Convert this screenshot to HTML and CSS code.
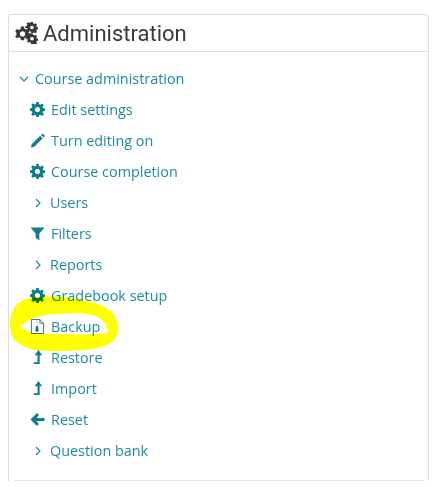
FILE: index.html
```html
<!DOCTYPE html>
<html lang="en">
<head>
  <meta charset="UTF-8">
  <title>Administration</title>
  <link rel="stylesheet" href="styles.css">
</head>
<body>
  <section class="block">
    <h2 class="block-title">
      <svg class="title-icon" viewBox="0 0 24 22"><path d="M7 4.500h3l.5 2.200 1.500.8 2-1 1.800 2.100-1.300 1.900v1.800l1.300 1.900-1.800 2.100-2-1-1.500.8-.5 2.200H7l-.5-2.200-1.500-.8-2 1L1.200 14.700l1.300-1.900V11L1.200 9.100 3 7l2 1 1.500-.8z" fill="#373a3c"/><circle cx="8.500" cy="11.900" r="2.600" fill="#fff"/><path d="M17 0h2l.3 1.400 1.200.5 1.200-.7 1.300 1.300-.7 1.200.5 1.200 1.400.3v2l-1.400.3-.5 1.200.7 1.200-1.300 1.300-1.200-.7-1.200.5L19 11h-2l-.3-1.400-1.200-.5-1.200.7-1.300-1.300.7-1.200-.5-1.200L11.300 6.300v-2l1.400-.3.500-1.200-.7-1.200 1.300-1.300 1.200.7 1.200-.5z" fill="#373a3c"/><circle cx="18" cy="5.500" r="1.800" fill="#fff"/><path d="M17 11.500h2l.3 1.400 1.200.5 1.200-.7 1.300 1.300-.7 1.200.5 1.200 1.400.3v2l-1.400.3-.5 1.200.7 1.200-1.300 1.300-1.200-.7-1.200.5L19 22h-2l-.3-1.400-1.200-.5-1.200.7-1.300-1.300.7-1.200-.5-1.200-1.400-.3v-2l1.400-.3.500-1.200-.7-1.200 1.300-1.300 1.200.7 1.200-.5z" fill="#373a3c"/><circle cx="18" cy="16.800" r="1.800" fill="#fff"/></svg>
      Administration
    </h2>
    <ul class="tree">
      <li class="tree-row tree-top"><svg class="chev" viewBox="0 0 10 10"><path d="M1 3l4 4 4-4"/></svg>Course administration</li>
      <li class="tree-row"><svg class="ico" viewBox="0 0 16 16"><path d="M6.700 0h2.600l.4 2.200 1.300.6 1.900-1.300 1.800 1.800-1.300 1.900.6 1.300 2.200.4v2.600l-2.200.4-.6 1.300 1.300 1.900-1.800 1.800-1.900-1.300-1.300.6-.4 2.200H6.700l-.4-2.200-1.300-.6-1.900 1.300-1.800-1.800 1.300-1.900-.6-1.300L-.2 9.300V6.700L2 6.300l.6-1.300L1.300 3.100l1.800-1.800L5 2.600l1.300-.6zM8 5.300a2.700 2.700 0 100 5.400 2.700 2.700 0 000-5.400z"/></svg>Edit settings</li>
      <li class="tree-row"><svg class="ico" viewBox="0 0 16 16"><path d="M1 15.500l.8-3.600L10.800 3l2.700 2.700-8.900 9zM11.800 2l1-1c.4-.3.900-.3 1.200 0l1.500 1.500c.3.300.3.800 0 1.200l-1 1z"/></svg>Turn editing on</li>
      <li class="tree-row"><svg class="ico" viewBox="0 0 16 16"><path d="M6.700 0h2.600l.4 2.200 1.300.6 1.900-1.300 1.800 1.800-1.300 1.900.6 1.300 2.200.4v2.600l-2.200.4-.6 1.300 1.300 1.900-1.800 1.800-1.900-1.300-1.300.6-.4 2.200H6.700l-.4-2.200-1.300-.6-1.900 1.300-1.800-1.800 1.300-1.900-.6-1.300L-.2 9.300V6.700L2 6.300l.6-1.300L1.300 3.100l1.800-1.800L5 2.600l1.300-.6zM8 5.300a2.700 2.700 0 100 5.400 2.700 2.700 0 000-5.400z"/></svg>Course completion</li>
      <li class="tree-row tree-branch"><svg class="chev" viewBox="0 0 10 10"><path d="M3 1l4 4-4 4"/></svg>Users</li>
      <li class="tree-row"><svg class="ico" viewBox="0 0 16 16"><path d="M.5 1.500h15L10 8v7.500L6 12.500V8z"/></svg>Filters</li>
      <li class="tree-row tree-branch"><svg class="chev" viewBox="0 0 10 10"><path d="M3 1l4 4-4 4"/></svg>Reports</li>
      <li class="tree-row"><svg class="ico" viewBox="0 0 16 16"><path d="M6.700 0h2.600l.4 2.200 1.300.6 1.900-1.300 1.800 1.800-1.300 1.900.6 1.300 2.200.4v2.600l-2.200.4-.6 1.300 1.300 1.900-1.800 1.800-1.900-1.300-1.300.6-.4 2.200H6.700l-.4-2.200-1.300-.6-1.900 1.300-1.800-1.800 1.300-1.900-.6-1.300L-.2 9.300V6.700L2 6.300l.6-1.300L1.300 3.100l1.800-1.800L5 2.600l1.300-.6zM8 5.300a2.700 2.700 0 100 5.400 2.700 2.700 0 000-5.400z"/></svg>Gradebook setup</li>
      <li class="tree-row"><svg class="ico" viewBox="0 0 16 16"><path d="M1.500.5h9l4 4v11h-13z" fill="#fff" stroke="#4a6a72"/><path d="M10.500.5v4h4" fill="none" stroke="#4a6a72"/><path d="M7 1.500h1v1H7zM7 3.500h1v1H7zM7 5.500h1v1H7z" fill="#7a8a90"/><path d="M6.600 7.500h1.800l.8 4.500a1.700 1.700 0 11-3.400 0z" fill="#0f6f80"/></svg>Backup</li>
      <li class="tree-row"><svg class="ico" viewBox="0 0 16 16"><path d="M9 0l4 5.500h-2.700V15H4v-2h4V5.500H5z"/></svg>Restore</li>
      <li class="tree-row"><svg class="ico" viewBox="0 0 16 16"><path d="M9 0l4 5.500h-2.700V15H4v-2h4V5.500H5z"/></svg>Import</li>
      <li class="tree-row"><svg class="ico" viewBox="0 0 16 16"><path d="M7.500 1 9.500 3.500 7 6.300H15.500v3.400H7l2.500 2.800-2 2.500L.5 8z"/></svg>Reset</li>
      <li class="tree-row tree-branch"><svg class="chev" viewBox="0 0 10 10"><path d="M3 1l4 4-4 4"/></svg>Question bank</li>
    </ul>
    <hr class="tree-end">
  </section>
  <svg class="marker" viewBox="0 0 438 487"><path fill-rule="evenodd" d="M23 300C40 294 70 296 95 303 110 307 119 316 118 330 117 345 100 351 60 351 30 352 12 346 10 328 9 314 15 304 23 300zM20 327C26 322 32 317 45 315 60 313 85 312 95 316 103 319 107 324 108 332 100 336 70 334 50 334 35 334 26 332 20 327z"/></svg>
</body>
</html>
```

FILE: styles.css
```css
html, body {
  height: 100%;
}
body {
  margin: 0;
  padding: 14px 9px 0 8px;
  box-sizing: border-box;
  background-color: #fff;
  font-family: "Open Sans", sans-serif;
  overflow: hidden;
  position: relative;
}
.block {
  border: 1px solid #dedede;
  border-bottom: none;
  border-radius: 4px 4px 0 0;
}
.block-title {
  display: flex;
  align-items: center;
  gap: 5px;
  height: 36px;
  margin: 0;
  padding-left: 5px;
  border-bottom: 1px solid #dedede;
  font-family: "Roboto", sans-serif;
  font-size: 22px;
  font-weight: 400;
  color: #373a3c;
}
.title-icon {
  width: 24px;
  height: 22px;
}
.tree {
  list-style: none;
  margin: 0;
  padding: 11px 0 0 21px;
}
.tree-row {
  display: flex;
  align-items: center;
  height: 31px;
  font-size: 14.4px;
  color: #1f8a9e;
}
.tree-top {
  margin-left: -11px;
}
.tree-row .ico {
  width: 15px;
  height: 15px;
  margin-right: 6px;
  fill: #0f7c8f;
}
.chev {
  width: 10px;
  height: 10px;
  margin-right: 6px;
  fill: none;
  stroke: #1f8a9e;
  stroke-width: 1.2;
}
.tree-branch .chev {
  margin-left: 3px;
  margin-right: 7px;
}
.tree-end {
  margin: 14px 5px 0;
  border: none;
  border-top: 1px solid #e6e6e6;
}
.marker {
  position: absolute;
  top: 0;
  left: 0;
  width: 438px;
  height: 487px;
  mix-blend-mode: multiply;
  fill: #ffff00;
  pointer-events: none;
}
```
